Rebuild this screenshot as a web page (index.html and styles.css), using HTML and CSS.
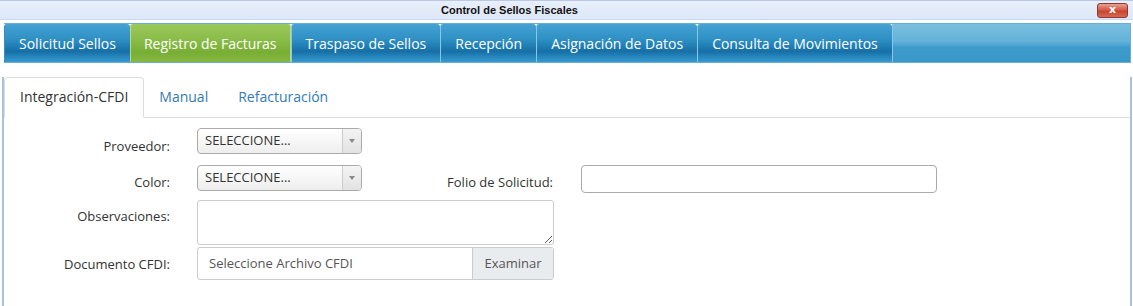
FILE: index.html
```html
<!DOCTYPE html>
<html lang="es">
  <head>
    <meta charset="UTF-8" />
    <meta name="viewport" content="width=device-width, initial-scale=1.0" />
    <title>Control de Sellos Fiscales</title>
    <link rel="stylesheet" href="styles.css">
  </head>
  <body class="body">
    <div class="titlebar">
      <span class="title">Control de Sellos Fiscales</span>
      <span class="close">x</span>
    </div>
    <nav class="menu">
      <a class="menuItem" href="#">Solicitud Sellos</a>
      <a class="menuItem active" href="#">Registro de Facturas</a>
      <a class="menuItem" href="#">Traspaso de Sellos</a>
      <a class="menuItem" href="#">Recepción</a>
      <a class="menuItem" href="#">Asignación de Datos</a>
      <a class="menuItem" href="#">Consulta de Movimientos</a>
      <span class="menuFill"></span>
    </nav>
    <div class="panel">
      <ul class="subTabs">
        <li class="subTab current">Integración-CFDI</li>
        <li class="subTab">Manual</li>
        <li class="subTab">Refacturación</li>
      </ul>
      <form class="form">
        <div class="row">
          <label class="lbl">Proveedor:</label>
          <div class="combo"><span class="comboText">SELECCIONE...</span><span class="comboArrow"></span></div>
        </div>
        <div class="row rowColor">
          <label class="lbl">Color:</label>
          <div class="combo"><span class="comboText">SELECCIONE...</span><span class="comboArrow"></span></div>
          <label class="lbl lblFolio">Folio de Solicitud:</label>
          <input type="text" class="folio">
        </div>
        <div class="row rowObs">
          <label class="lbl">Observaciones:</label>
          <textarea class="obs"></textarea>
        </div>
        <div class="row rowDoc">
          <label class="lbl">Documento CFDI:</label>
          <div class="fileGroup">
            <span class="fileName">Seleccione Archivo CFDI</span>
            <span class="fileBtn">Examinar</span>
          </div>
        </div>
      </form>
    </div>
  </body>
</html>
```

FILE: styles.css
```css
.body {
  margin: 0;
  background-color: #fff;
  font-family: "Open Sans", "Noto Sans", sans-serif;
  font-size: 13px;
  color: #333;
  width: 1133px;
  height: 306px;
  overflow: hidden;
}
.titlebar {
  display: flex;
  align-items: center;
  height: 18px;
  border-top: 1px solid #b8c8e8;
  background: linear-gradient(#e9effb, #dde7f7);
  border-bottom: 1px solid #c9d6ee;
}
.title {
  margin-left: 441px;
  font-family: "Liberation Sans", sans-serif;
  font-weight: bold;
  font-size: 11px;
  color: #111;
}
.close {
  margin-left: auto;
  margin-right: 5px;
  width: 31px;
  height: 15px;
  margin-top: 1px;
  box-sizing: border-box;
  border: 1px solid #8a3a30;
  border-radius: 3px;
  background: linear-gradient(#e8a093, #d0533f 50%, #c4402c 51%, #d66a54);
  color: #fff;
  font-family: "DejaVu Sans", sans-serif;
  font-weight: bold;
  font-size: 11px;
  line-height: 12px;
  text-align: center;
}
.menu {
  display: flex;
  height: 40px;
  margin: 3px 2px 0 4px;
  border: 1px solid #6aaed3;
  border-left: none;
  box-sizing: border-box;
}
.menuItem {
  display: flex;
  align-items: center;
  padding: 1px 14px 0 14px;
  font-size: 14px;
  color: #fff;
  text-decoration: none;
  background: linear-gradient(#45a2d3 0%, #2f90c4 40%, #1f7db4 60%, #166fa5 72%, #2a8cc3 90%, #3a98cc 100%);
  border-left: 1px solid #8cc6e4;
  border-top-left-radius: 3px;
  border-top-right-radius: 3px;
}
.menuItem:first-child {
  border-left: 1px solid #3a8fc0;
}
.menuItem.active {
  padding: 1px 13px 0 13px;
  background: linear-gradient(#9cc85c 0%, #88bb46 45%, #79ae35 75%, #86b843 100%);
  border-left: 1px solid #b6da86;
  border-right: 1px solid #b6da86;
}
.menuFill {
  flex: 1;
  border-left: 1px solid #8cc6e4;
  background: linear-gradient(#79bfdf 0%, #64b3da 45%, #3d9bcb 62%, #3a98c9 100%);
}
.panel {
  margin: 0 1px 0 2px;
  height: 241px;
  border-left: 2px solid #a7c3d6;
  border-right: 2px solid #a7c3d6;
  border-bottom: 3px solid #a7c3d6;
  box-sizing: border-box;
  background-color: #fff;
}
.subTabs {
  display: flex;
  list-style: none;
  margin: 14px 0 0 0;
  padding: 0;
  border-bottom: 1px solid #ddd;
  font-size: 14px;
}
.subTab {
  padding: 9px 14px 10px 14px;
  line-height: 20px;
  color: #337ab7;
  border: 1px solid transparent;
  border-radius: 4px 4px 0 0;
  margin-bottom: -1px;
}
.subTab.current {
  padding: 9px 15px 10px 15px;
  color: #333;
  border-color: #ddd #ddd #fff #ddd;
  background-color: #fff;
}
.form {
  display: flex;
  flex-direction: column;
  padding-top: 10px;
}
.row {
  display: flex;
  align-items: flex-start;
}
.rowColor {
  margin-top: 10px;
}
.rowObs {
  margin-top: 7px;
}
.rowDoc {
  margin-top: 2px;
}
.lbl {
  width: 166px;
  text-align: right;
  margin-right: 27px;
  line-height: 18px;
  padding-top: 9px;
}
.rowColor .lbl,
.rowDoc .lbl {
  padding-top: 8px;
}
.rowObs .lbl {
  padding-top: 7px;
}
.rowColor .lblFolio {
  width: 191px;
  margin-right: 28px;
}
.combo {
  display: flex;
  width: 165px;
  height: 26px;
  box-sizing: border-box;
  border: 1px solid #aaa;
  border-radius: 4px;
  background: linear-gradient(#fff, #eee);
}
.comboText {
  flex: 1;
  padding-left: 7px;
  line-height: 23px;
}
.comboArrow {
  width: 18px;
  border-left: 1px solid #ccc;
  background: linear-gradient(#f4f4f4, #e2e2e2);
  border-radius: 0 3px 3px 0;
  position: relative;
}
.comboArrow::after {
  content: "";
  position: absolute;
  left: 6px;
  top: 10px;
  border-left: 3px solid transparent;
  border-right: 3px solid transparent;
  border-top: 4px solid #888;
}
.folio {
  width: 356px;
  height: 28px;
  box-sizing: border-box;
  border: 1px solid #aaa;
  border-radius: 4px;
  margin: 0;
}
.obs {
  width: 357px;
  height: 45px;
  box-sizing: border-box;
  border: 1px solid #ccc;
  border-radius: 3px;
  margin: 0;
  font-family: inherit;
}
.fileGroup {
  display: flex;
  width: 357px;
  height: 33px;
  box-sizing: border-box;
  border: 1px solid #ccc;
  border-radius: 3px;
}
.fileName {
  flex: 1;
  padding-left: 11px;
  line-height: 31px;
  color: #555;
}
.fileBtn {
  width: 80px;
  text-align: center;
  line-height: 31px;
  color: #555;
  background-color: #e9ecef;
  border-left: 1px solid #ccc;
}
```
